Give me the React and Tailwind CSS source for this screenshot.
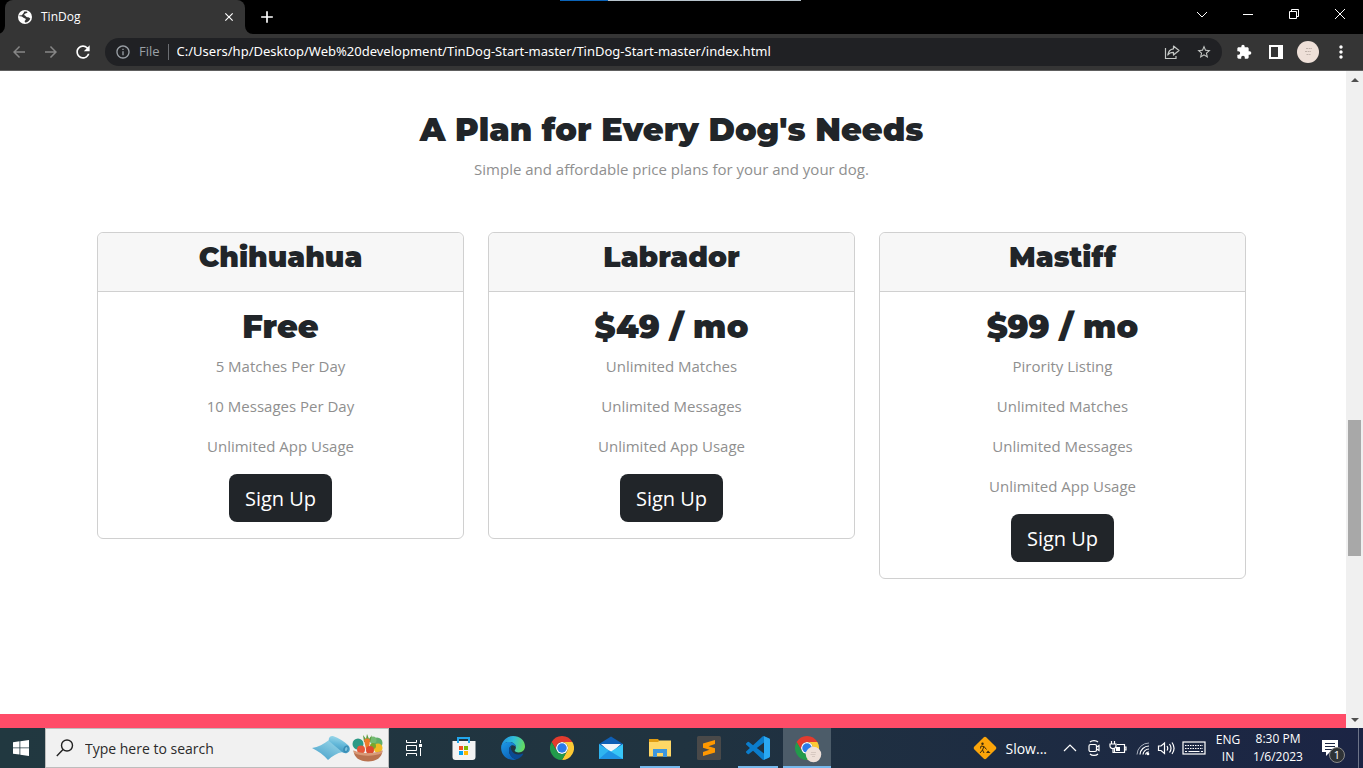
import React from "react";
import {
  MdAdd,
  MdArrowBack,
  MdArrowForward,
  MdClose,
  MdExtension,
  MdInfoOutline,
  MdMoreVert,
  MdRefresh,
  MdStarBorder,
} from "react-icons/md";

const plans = [
  {
    name: "Chihuahua",
    price: "Free",
    features: ["5 Matches Per Day", "10 Messages Per Day", "Unlimited App Usage"],
  },
  {
    name: "Labrador",
    price: "$49 / mo",
    features: ["Unlimited Matches", "Unlimited Messages", "Unlimited App Usage"],
  },
  {
    name: "Mastiff",
    price: "$99 / mo",
    features: ["Pirority Listing", "Unlimited Matches", "Unlimited Messages", "Unlimited App Usage"],
  },
];

/* ---------- Browser chrome ---------- */

function TabCorner({ flip }) {
  return (
    <svg viewBox="0 0 8 8" className={flip ? "size-2 -scale-x-100 self-end" : "size-2 self-end"} aria-hidden="true">
      <path d="M8 0v8H0a8 8 0 0 0 8-8z" fill="#353535" />
    </svg>
  );
}

function GlobeIcon() {
  return (
    <svg viewBox="0 0 16 16" className="size-4" aria-hidden="true">
      <circle cx="8" cy="8" r="7" fill="#fff" />
      <path
        d="M10.500 2.600C8.800 2.500 7.400 3.300 7.300 4.500c0 1 .9 1.200 1.600 1.700.7.500.5 1.300 1.500 1.500 1.200.1 1.500.6 1.400 1.500-.2 1.600-1.400 2.700-3 3.600-.9.400-1.600-.1-1.500-.9.100-.8.900-.9 1.200-1.600.2-.9-.4-1.300-1.300-1.500C5.900 8.500 5.200 7.400 4 7.200c-.9-.1-1.300.1-1.500.4 0-1.600.7-2.900 1.900-3.900"
        fill="none"
        stroke="none"
      />
      <path
        d="M2.400 7.300c1.600-.2 2.900.2 3.800 1.100.8.700 2.100.5 2.500 1.500.3 1-.8 1.300-1 2.200-.1.600.1 1.200.4 1.500 2.600-.1 4.500-1.700 5.200-4-.9-.9-1.900-1.200-3-1.300C9 8.100 9 7 8 6.600c-.8-.3-1-1-.4-1.600.9-.8 2.500-.6 3-1.700l-.6-.6c-1-.4-2-.4-3 0L5.900 4.600C5 5.400 3.500 5.800 2.600 6.200z"
        fill="#353535"
      />
      <path d="M2.800 6.200C3.400 4.200 5 2.900 7.200 2.500L6 4.900 4.300 6.500z" fill="#fff" />
    </svg>
  );
}

function WindowButton({ label, children }) {
  return (
    <button type="button" aria-label={label} className="flex h-7 w-[46px] items-center justify-center text-white">
      <svg viewBox="0 0 12 12" className="size-3" fill="none" stroke="currentColor" aria-hidden="true">
        {children}
      </svg>
    </button>
  );
}

function TabStrip() {
  return (
    <div className="relative flex h-[34px] shrink-0 bg-black">
      <div className="absolute top-0 left-[560px] flex h-px w-[241px]">
        <span className="w-12 bg-[#0a63b8]" />
        <span className="flex-1 bg-[#b8c4cc]" />
      </div>
      <div className="-ml-[3px] flex">
        <TabCorner />
        <div className="flex w-60 items-center rounded-t-lg bg-[#353535] pr-[9px] pl-3">
          <GlobeIcon />
          <span className="ml-2 flex-1 text-xs text-white">TinDog</span>
          <button type="button" aria-label="Close tab" className="text-white">
            <MdClose className="size-3.5" />
          </button>
        </div>
        <TabCorner flip />
      </div>
      <button type="button" aria-label="New tab" className="ml-1 flex items-center text-white">
        <MdAdd className="size-5" />
      </button>
      <div className="ml-auto flex">
        <WindowButton label="Search tabs">
          <path d="M1 4l5 5 5-5" />
        </WindowButton>
        <WindowButton label="Minimize">
          <path d="M1 6.500h10" />
        </WindowButton>
        <WindowButton label="Restore">
          <path d="M1.500 3.500h7v7h-7zM3.500 3.500v-2h7v7h-2" />
        </WindowButton>
        <WindowButton label="Close">
          <path d="M1 1l10 10M11 1L1 11" />
        </WindowButton>
      </div>
    </div>
  );
}

function Toolbar() {
  return (
    <div className="flex h-[37px] shrink-0 items-center border-b border-[#5e5e5e] bg-[#353535] pr-3 pl-2.5">
      <button type="button" aria-label="Back" className="text-[#868686]">
        <MdArrowBack className="size-[18px]" />
      </button>
      <button type="button" aria-label="Forward" className="ml-3.5 text-[#868686]">
        <MdArrowForward className="size-[18px]" />
      </button>
      <button type="button" aria-label="Reload" className="ml-[13px] text-white">
        <MdRefresh className="size-5" />
      </button>
      <div className="ml-3 flex h-7 flex-1 items-center rounded-full bg-[#202124] pr-2.5 pl-2.5">
        <MdInfoOutline className="size-4 text-[#9aa0a6]" aria-hidden="true" />
        <span className="ml-2 text-[13px] text-[#9aa0a6]">File</span>
        <span className="mx-2 h-4 w-px bg-[#6b6e72]" />
        <input
          type="text"
          aria-label="Address"
          defaultValue="C:/Users/hp/Desktop/Web%20development/TinDog-Start-master/TinDog-Start-master/index.html"
          className="min-w-0 flex-1 bg-transparent font-['Noto_Sans',sans-serif] text-[13px] text-white outline-none"
        />
        <button type="button" aria-label="Share" className="text-[#c4c7c5]">
          <svg viewBox="0 0 16 16" className="size-4" fill="none" stroke="currentColor" strokeWidth="1.200" aria-hidden="true">
            <path d="M1.500 4v10.500H12V12" />
            <path d="M9.500 2l5.500 4.500L9.500 11V8.300C7 8.300 5 9 3.800 11c.4-3.500 2.500-5.800 5.700-6.200z" strokeLinejoin="round" />
          </svg>
        </button>
        <button type="button" aria-label="Bookmark this page" className="ml-4 text-[#c4c7c5]">
          <MdStarBorder className="size-4" />
        </button>
      </div>
      <button type="button" aria-label="Extensions" className="ml-3.5 text-white">
        <MdExtension className="size-4" />
      </button>
      <button type="button" aria-label="Side panel" className="ml-4 text-white">
        <svg viewBox="0 0 16 16" className="size-4" aria-hidden="true">
          <path d="M1 1h14v14H1zM3 3v10h7V3z" fill="currentColor" fillRule="evenodd" />
        </svg>
      </button>
      <button type="button" aria-label="Profile" className="ml-[13px]">
        <Avatar className="size-[22px]" />
      </button>
      <button type="button" aria-label="Menu" className="ml-3 text-white">
        <MdMoreVert className="size-5" />
      </button>
    </div>
  );
}

function Avatar({ className }) {
  return (
    <svg viewBox="0 0 22 22" className={className} aria-hidden="true">
      <circle cx="11" cy="11" r="11" fill="#eee0d8" />
      <path d="M9 7.500h6M8 10.500h6M9.500 13.500h4" stroke="#bfb2aa" strokeWidth="1" strokeDasharray="2 .6" />
    </svg>
  );
}

function Scrollbar() {
  return (
    <div className="flex w-[17px] shrink-0 flex-col bg-[#f0f0f0] text-[#505050]">
      <button type="button" aria-label="Scroll up" className="flex h-[17px] items-center justify-center">
        <svg viewBox="0 0 8 4" className="h-1 w-2" fill="currentColor" aria-hidden="true">
          <path d="M4 0l4 4H0z" />
        </svg>
      </button>
      <div className="grow-[332]" />
      <div className="mx-0.5 h-[136px] bg-[#a8a8a8]" />
      <div className="grow-[155]" />
      <button type="button" aria-label="Scroll down" className="flex h-[17px] items-center justify-center">
        <svg viewBox="0 0 8 4" className="h-1 w-2" fill="currentColor" aria-hidden="true">
          <path d="M0 0h8L4 4z" />
        </svg>
      </button>
    </div>
  );
}

/* ---------- Page ---------- */

function PlanCard({ plan }) {
  return (
    <article className="rounded-md border border-[#d0d0d0] bg-white">
      <header className="rounded-t-md border-b border-[#d0d0d0] bg-[#f7f7f7] pt-2 pb-[18px]">
        <h3 className="font-['Montserrat','Inter',sans-serif] text-[28px] leading-8 font-black">{plan.name}</h3>
      </header>
      <div className="p-4">
        <h2 className="mb-2 font-['Montserrat','Inter',sans-serif] text-[32px] leading-[38px] font-black">{plan.price}</h2>
        {plan.features.map((feature) => (
          <p key={feature} className="mb-4 text-[15px] leading-6 text-[#8f8f8f]">
            {feature}
          </p>
        ))}
        <button type="button" className="h-12 rounded-lg bg-[#212529] px-4 pt-px text-xl text-white">
          Sign Up
        </button>
      </div>
    </article>
  );
}

function PricingPage() {
  return (
    <main className="flex min-w-0 flex-1 flex-col overflow-hidden bg-white text-center text-[#212529]">
      <section className="pt-10 pr-[100px] pb-[135px] pl-[97px]">
        <h2 className="mb-2 font-['Montserrat','Inter',sans-serif] text-[32px] leading-[38px] font-black">
          A Plan for Every Dog's Needs
        </h2>
        <p className="mb-[51px] text-[15px] leading-6 text-[#8f8f8f]">
          Simple and affordable price plans for your and your dog.
        </p>
        <div className="grid grid-cols-3 items-start gap-6">
          {plans.map((plan) => (
            <PlanCard key={plan.name} plan={plan} />
          ))}
        </div>
      </section>
      <div className="flex-1 bg-[#ff4c68]" />
    </main>
  );
}

/* ---------- Taskbar ---------- */

function ChromeLogo({ className, badge }) {
  return (
    <svg viewBox="0 0 48 48" className={className} aria-hidden="true">
      <circle cx="24" cy="24" r="12" fill="#fff" />
      <path d="M24 12h20.780a23.990 23.990 0 0 0-41.560 0L13.610 30A11.990 11.990 0 0 1 24 12z" fill="#e33b2e" />
      <path d="M34.390 30L24 48a23.990 23.990 0 0 0 20.780-36H24a11.990 11.990 0 0 1 10.390 18z" fill="#fcc934" />
      <path d="M13.610 30L3.220 12.010A23.990 23.990 0 0 0 24 48l10.390-18a11.990 11.990 0 0 1-20.780 0z" fill="#229a4b" />
      <circle cx="24" cy="24" r="9.500" fill="#2b7bea" />
      {badge && (
        <g>
          <circle cx="37" cy="37" r="15.500" fill="#eee0d8" />
          <path d="M32 33h10M31 37h10M34 41h6" stroke="#cfc1b9" strokeWidth="1.500" />
        </g>
      )}
    </svg>
  );
}

function TaskViewIcon() {
  return (
    <svg viewBox="0 0 16 16" className="size-4" fill="none" stroke="#fff" aria-hidden="true">
      <path d="M.5 0v2.500h10V0M.5 16v-2.500h10V16M.5 5.500h10v5H.5zM14.500 0v3M14.500 8v8" />
      <path d="M13 4h3v3h-3z" fill="#fff" stroke="none" />
    </svg>
  );
}

function StoreIcon() {
  return (
    <svg viewBox="0 0 24 24" className="size-6" aria-hidden="true">
      <path d="M.5 5h23v16a3 3 0 0 1-3 3h-17a3 3 0 0 1-3-3z" fill="#f3f3f3" />
      <path d="M7 10h4v4H7z" fill="#f25022" />
      <path d="M12 10h4v4h-4z" fill="#7fba00" />
      <path d="M7 15h4v4H7z" fill="#00a4ef" />
      <path d="M12 15h4v4h-4z" fill="#ffb900" />
      <path d="M6 7V2h11v5" fill="none" stroke="#22a7ee" strokeWidth="2" />
    </svg>
  );
}

function EdgeIcon() {
  return (
    <svg viewBox="0 0 24 24" className="size-6" aria-hidden="true">
      <defs>
        <linearGradient id="edge-top" x1="0" y1="0.3" x2="1" y2="0.5">
          <stop offset="0" stopColor="#1f8fe0" />
          <stop offset="0.5" stopColor="#31bfd8" />
          <stop offset="1" stopColor="#66dc5c" />
        </linearGradient>
        <linearGradient id="edge-left" x1="0" y1="0" x2="0.6" y2="1">
          <stop offset="0" stopColor="#1d9ae8" />
          <stop offset="1" stopColor="#0c62b8" />
        </linearGradient>
      </defs>
      <path d="M.2 11C1 4.500 6 0 12 0c7 0 12 4.800 12 10.300 0 3.900-2.900 6.200-6.200 6.200-2.600 0-4.100-.9-4.100-1.900 0-.9 1.200-1.300 1.200-3.400C14.900 8 11.500 6 8 6 4.500 6 1.500 8 .2 11z" fill="url(#edge-top)" />
      <path d="M.1 12C0 8.500 3.700 6 8 6c4 0 6.900 2.200 6.900 5.200-.8-1.200-1.900-1.900-3.100-1.900C9 9.300 8 12 8 14.500c0 4.500 3.500 8 7.500 9C8 25.500.4 20.500.1 12z" fill="url(#edge-left)" />
      <path d="M11 9.400C8.800 10 8 12.400 8 14.500c0 4.800 3.800 8.600 8 8.800 3-1.100 5-3 6.200-5.300.2-.5-.2-.7-.6-.5-4.500 2.200-10 .5-11.500-4-.5-1.500-.1-3.200.9-4.100z" fill="#0a4a93" />
    </svg>
  );
}

function MailIcon() {
  return (
    <svg viewBox="0 0 24 24" className="size-6" aria-hidden="true">
      <path d="M0 8l12-7.500L24 8v5H0z" fill="#0f5fb5" />
      <path d="M2 8h20l-10 9z" fill="#f2f6fa" />
      <path d="M0 8l14 9-13 6H0z" fill="#2fb4f0" />
      <path d="M24 8v15H0z" fill="#38c6f7" />
      <path d="M0 23h24L10 14.500z" fill="#1f93e4" />
    </svg>
  );
}

function FolderIcon() {
  return (
    <svg viewBox="0 0 24 24" className="size-6" aria-hidden="true">
      <path d="M1 3h9l1.500 2H23v5H1z" fill="#e09c12" />
      <path d="M1 6h9l1.500-1.500H23V20.500H1z" fill="#ffd766" />
      <path d="M5 21v-8h14v8h-4v-4H9v4z" fill="#3e97dd" />
    </svg>
  );
}

function SublimeIcon() {
  return (
    <svg viewBox="0 0 24 24" className="size-6" aria-hidden="true">
      <rect width="24" height="24" rx="1.500" fill="#494949" />
      <path d="M18 4v4l-6.500 2.200L18 12.200v4.300L6 20v-4l6.500-2.200L6 11.800V7.500z" fill="#ff9800" />
    </svg>
  );
}

function CodeIcon() {
  return (
    <svg viewBox="0 0 24 24" className="size-6" aria-hidden="true">
      <path
        d="M23.150 2.587L18.210.21a1.494 1.494 0 0 0-1.705.29l-9.460 8.630-4.120-3.128a.999.999 0 0 0-1.276.057L.327 7.261A1 1 0 0 0 .326 8.740L3.899 12 .326 15.260a1 1 0 0 0 .001 1.479L1.650 17.940a.999.999 0 0 0 1.276.057l4.120-3.128 9.460 8.630a1.492 1.492 0 0 0 1.704.290l4.942-2.377A1.500 1.500 0 0 0 24 20.060V3.939a1.500 1.500 0 0 0-.850-1.352zm-5.146 14.861L10.826 12l7.178-5.448v10.896z"
        fill="#0b7dcc"
      />
      <path d="M18 .15l5.150 2.437A1.500 1.500 0 0 1 24 3.940v16.120a1.500 1.500 0 0 1-.850 1.352L18 23.850z" fill="#2aa8f2" />
    </svg>
  );
}

function YogaMatIcon() {
  return (
    <svg viewBox="0 0 38 26" className="h-[26px] w-[38px]" aria-hidden="true">
      <defs>
        <linearGradient id="mat-flat" x1="0.1" y1="0.9" x2="0.7" y2="0.1">
          <stop offset="0" stopColor="#4ba3cb" />
          <stop offset="1" stopColor="#8fd0e5" />
        </linearGradient>
        <linearGradient id="mat-roll" x1="0.6" y1="0" x2="0.4" y2="1">
          <stop offset="0" stopColor="#a3dcec" />
          <stop offset="0.5" stopColor="#63b8d9" />
          <stop offset="1" stopColor="#3c93bd" />
        </linearGradient>
      </defs>
      <path d="M0 13c6-1 12-4 17-8l14 12c-6 1-11 4-15 8C12 20 6 16 0 13z" fill="url(#mat-flat)" />
      <path d="M17 6c-1-3 1-5.500 4-5 6 2 11 5.500 15.500 9.500 2.500 3 1.500 6.500-1.500 7.500-2 .7-4-.2-5.500-1.500z" fill="url(#mat-roll)" />
      <ellipse cx="34" cy="14" rx="2.600" ry="3.600" fill="#3a8db5" transform="rotate(20 34 14)" />
      <ellipse cx="34.200" cy="14" rx="1.200" ry="2" fill="#79c3dd" transform="rotate(20 34 14)" />
    </svg>
  );
}

function VegetableBowlIcon() {
  return (
    <svg viewBox="0 0 32 28" className="h-7 w-8" aria-hidden="true">
      <circle cx="6" cy="10" r="5.500" fill="#2d9a86" />
      <circle cx="25" cy="9" r="5.500" fill="#5fae6c" />
      <circle cx="21" cy="6" r="3.500" fill="#74bb72" />
      <path d="M11 1l3 4 1-5 2 5 3-4-2 7h-6z" fill="#5c9c3d" />
      <path d="M12 6c2-2 5-2 6 0l-1 9h-3z" fill="#ef7b2b" />
      <circle cx="26" cy="14" r="4.500" fill="#f0bb23" />
      <circle cx="21" cy="12" r="3" fill="#79a72c" />
      <circle cx="9" cy="15.500" r="4" fill="#e65838" />
      <circle cx="18" cy="16" r="4" fill="#dd4a30" />
      <path d="M1.500 16.500c6 3.500 23 3.500 29 0-.5 7-6 11-14.500 11S2 23.500 1.500 16.500z" fill="#b9724f" />
      <path d="M1.500 16.500c6 3.500 23 3.500 29 0l-.5 2.500c-7 3.500-21 3.500-28 0z" fill="#d99a78" />
    </svg>
  );
}

function AppButton({ label, running, active, children }) {
  return (
    <button
      type="button"
      aria-label={label}
      className={
        active
          ? "flex w-12 flex-col items-center bg-[#4c5c69]"
          : "flex w-12 flex-col items-center"
      }
    >
      <span className="flex flex-1 items-center pt-0.5">{children}</span>
      <span
        className={
          active ? "h-0.5 w-full bg-[#76b9ed]" : running ? "h-0.5 w-10 bg-[#76b9ed]" : "h-0.5 w-10"
        }
      />
    </button>
  );
}

function TrayIcons() {
  return (
    <div className="flex items-center text-white">
      <button type="button" aria-label="Show hidden icons" className="mr-2.5">
        <svg viewBox="0 0 14 14" className="size-3.5" fill="none" stroke="currentColor" strokeWidth="1.200" aria-hidden="true">
          <path d="M1 10l6-6 6 6" />
        </svg>
      </button>
      <button type="button" aria-label="Meet now" className="mr-2">
        <svg viewBox="0 0 14 18" className="h-[18px] w-3.5" fill="none" stroke="currentColor" strokeWidth="1.200" aria-hidden="true">
          <path d="M3 3c2-1.800 6-1.800 8 0M3 15c2 1.800 6 1.800 8 0" />
          <rect x="2" y="5.500" width="7.500" height="7" rx="1.500" />
          <path d="M9.500 8l2.500-1.500v5L9.500 10" />
        </svg>
      </button>
      <button type="button" aria-label="Battery" className="mr-2">
        <svg viewBox="0 0 18 16" className="h-4 w-[18px]" fill="none" stroke="currentColor" strokeWidth="1.200" aria-hidden="true">
          <path d="M8 4.500h7.500v8h-10v-4M15.500 7H17v3h-1.500" />
          <path d="M2.500 1v3M5.500 1v3M1 4h6v2c0 1.500-1 2.500-3 2.500S1 7.500 1 6zM4 8v4.500h2" />
          <path d="M7 7h4v4H7z" fill="currentColor" stroke="none" />
        </svg>
      </button>
      <button type="button" aria-label="Network" className="mr-1.5">
        <svg viewBox="0 0 16 16" className="size-4" fill="none" stroke="currentColor" aria-hidden="true">
          <path d="M2 14.500A12 12 0 0 1 14 3" stroke="#a9b0bd" />
          <path d="M5 14.500A9 9 0 0 1 14 6M8 14.500A6 6 0 0 1 14 9" strokeWidth="1.200" />
          <path d="M10.500 14.500A3.500 3.500 0 0 1 14 12" strokeWidth="1.200" />
          <circle cx="13" cy="14" r="1.300" fill="currentColor" stroke="none" />
        </svg>
      </button>
      <button type="button" aria-label="Volume" className="mr-[7px]">
        <svg viewBox="0 0 18 16" className="h-4 w-[18px]" fill="none" stroke="currentColor" strokeWidth="1.200" aria-hidden="true">
          <path d="M1.500 6H4l3.500-3v10.500L4 10.500H1.500z" />
          <path d="M10 6c1 1.500 1 3 0 4.500M12.500 4c1.800 2.500 1.800 6 0 8.500M15 2.500c2.500 3.500 2.500 8 0 11.500" />
        </svg>
      </button>
      <button type="button" aria-label="Touch keyboard">
        <svg viewBox="0 0 24 14" className="h-3.5 w-6" fill="none" stroke="currentColor" aria-hidden="true">
          <rect x="1" y="1" width="22" height="12" strokeWidth="1.200" />
          <path d="M3 4.500h18M3 7.500h18" strokeDasharray="1.500 1" />
          <path d="M3 10.500h2M6.500 10.500h11M19 10.500h2" />
        </svg>
      </button>
    </div>
  );
}

function Taskbar() {
  return (
    <footer className="flex h-10 shrink-0 bg-linear-to-r from-[#213840] via-[#203340] to-[#1b2444] text-white">
      <button type="button" aria-label="Start" className="flex w-[45px] items-center justify-center pr-1">
        <svg viewBox="0 0 16 16" className="size-4" fill="#fff" aria-hidden="true">
          <path d="M0 2.200l6.500-.9v6.200H0zM7.300 1.200L16 0v7.500H7.300zM0 8.300h6.500v6.300L0 13.700zM7.300 8.300H16V16l-8.700-1.200z" />
        </svg>
      </button>
      <div className="flex w-[344px] items-center border border-[#bdbdbd] bg-[#f1f1f1] pr-1 pl-2.5">
        <svg viewBox="0 0 18 18" className="size-[18px]" fill="none" stroke="#222" strokeWidth="1.400" aria-hidden="true">
          <circle cx="11" cy="6.500" r="5.500" />
          <path d="M7 10.500L.8 17" />
        </svg>
        <input
          type="search"
          aria-label="Search"
          placeholder="Type here to search"
          className="ml-[11px] min-w-0 flex-1 bg-transparent pt-0.5 text-sm outline-none placeholder:text-[#2b2b2b]"
        />
        <YogaMatIcon />
        <span className="w-0.5" />
        <VegetableBowlIcon />
      </div>
      <div className="flex gap-px">
        <button type="button" aria-label="Task view" className="flex w-[50px] items-center justify-center pr-px">
          <TaskViewIcon />
        </button>
        <AppButton label="Microsoft Store">
          <StoreIcon />
        </AppButton>
        <AppButton label="Microsoft Edge">
          <EdgeIcon />
        </AppButton>
        <AppButton label="Google Chrome">
          <ChromeLogo className="size-6" />
        </AppButton>
        <AppButton label="Mail">
          <MailIcon />
        </AppButton>
        <AppButton label="File Explorer" running>
          <FolderIcon />
        </AppButton>
        <AppButton label="Sublime Text">
          <SublimeIcon />
        </AppButton>
        <AppButton label="Visual Studio Code" running>
          <CodeIcon />
        </AppButton>
        <AppButton label="Google Chrome, profile window" active>
          <ChromeLogo className="size-6 overflow-visible" badge />
        </AppButton>
      </div>
      <div className="ml-auto flex items-center">
        <button type="button" className="mr-4 flex items-center gap-2 text-sm">
          <svg viewBox="0 0 24 24" className="size-6" aria-hidden="true">
            <rect x="3.500" y="3.500" width="17" height="17" rx="2" fill="#fba50a" transform="rotate(45 12 12)" />
            <circle cx="9.500" cy="7.800" r="1.200" fill="#3b2b0c" />
            <path d="M8 10l3 .5 2.500 3M11 10.500l-1.500 3.500 1.500 3M9.500 14L7 17M8 10l-.5 2.500" fill="none" stroke="#3b2b0c" />
            <path d="M13 17l2-2.500 2.500 2.500z" fill="#3b2b0c" />
          </svg>
          <span className="pt-0.5">Slow...</span>
        </button>
        <TrayIcons />
        <button type="button" className="ml-1 w-9 text-center text-xs leading-[17px]">
          ENG
          <br />
          IN
        </button>
        <button type="button" className="ml-1 w-14 text-center text-xs leading-[18px] whitespace-nowrap">
          8:30 PM
          <br />
          1/6/2023
        </button>
        <button type="button" aria-label="Notifications" className="relative mr-1 ml-3 flex h-10 w-[41px] items-center border-r border-[#6d7488] pl-1">
          <svg viewBox="0 0 16 16" className="size-4" aria-hidden="true">
            <path d="M0 0h16v12H8l-4 4v-4H0z" fill="#fff" />
            <path d="M3 3.500h10M3 6.500h10M3 9.500h7" stroke="#1b2744" />
          </svg>
          <span className="absolute top-[19px] left-[11px] flex size-4 items-center justify-center rounded-full border border-[#8a8a8a] bg-[#2f3336] text-[11px]">
            1
          </span>
        </button>
      </div>
    </footer>
  );
}

export default function App() {
  return (
    <div className="flex h-screen flex-col overflow-hidden font-['Segoe_UI','Open_Sans',sans-serif]">
      <TabStrip />
      <Toolbar />
      <div className="flex min-h-0 flex-1">
        <PricingPage />
        <Scrollbar />
      </div>
      <Taskbar />
    </div>
  );
}
